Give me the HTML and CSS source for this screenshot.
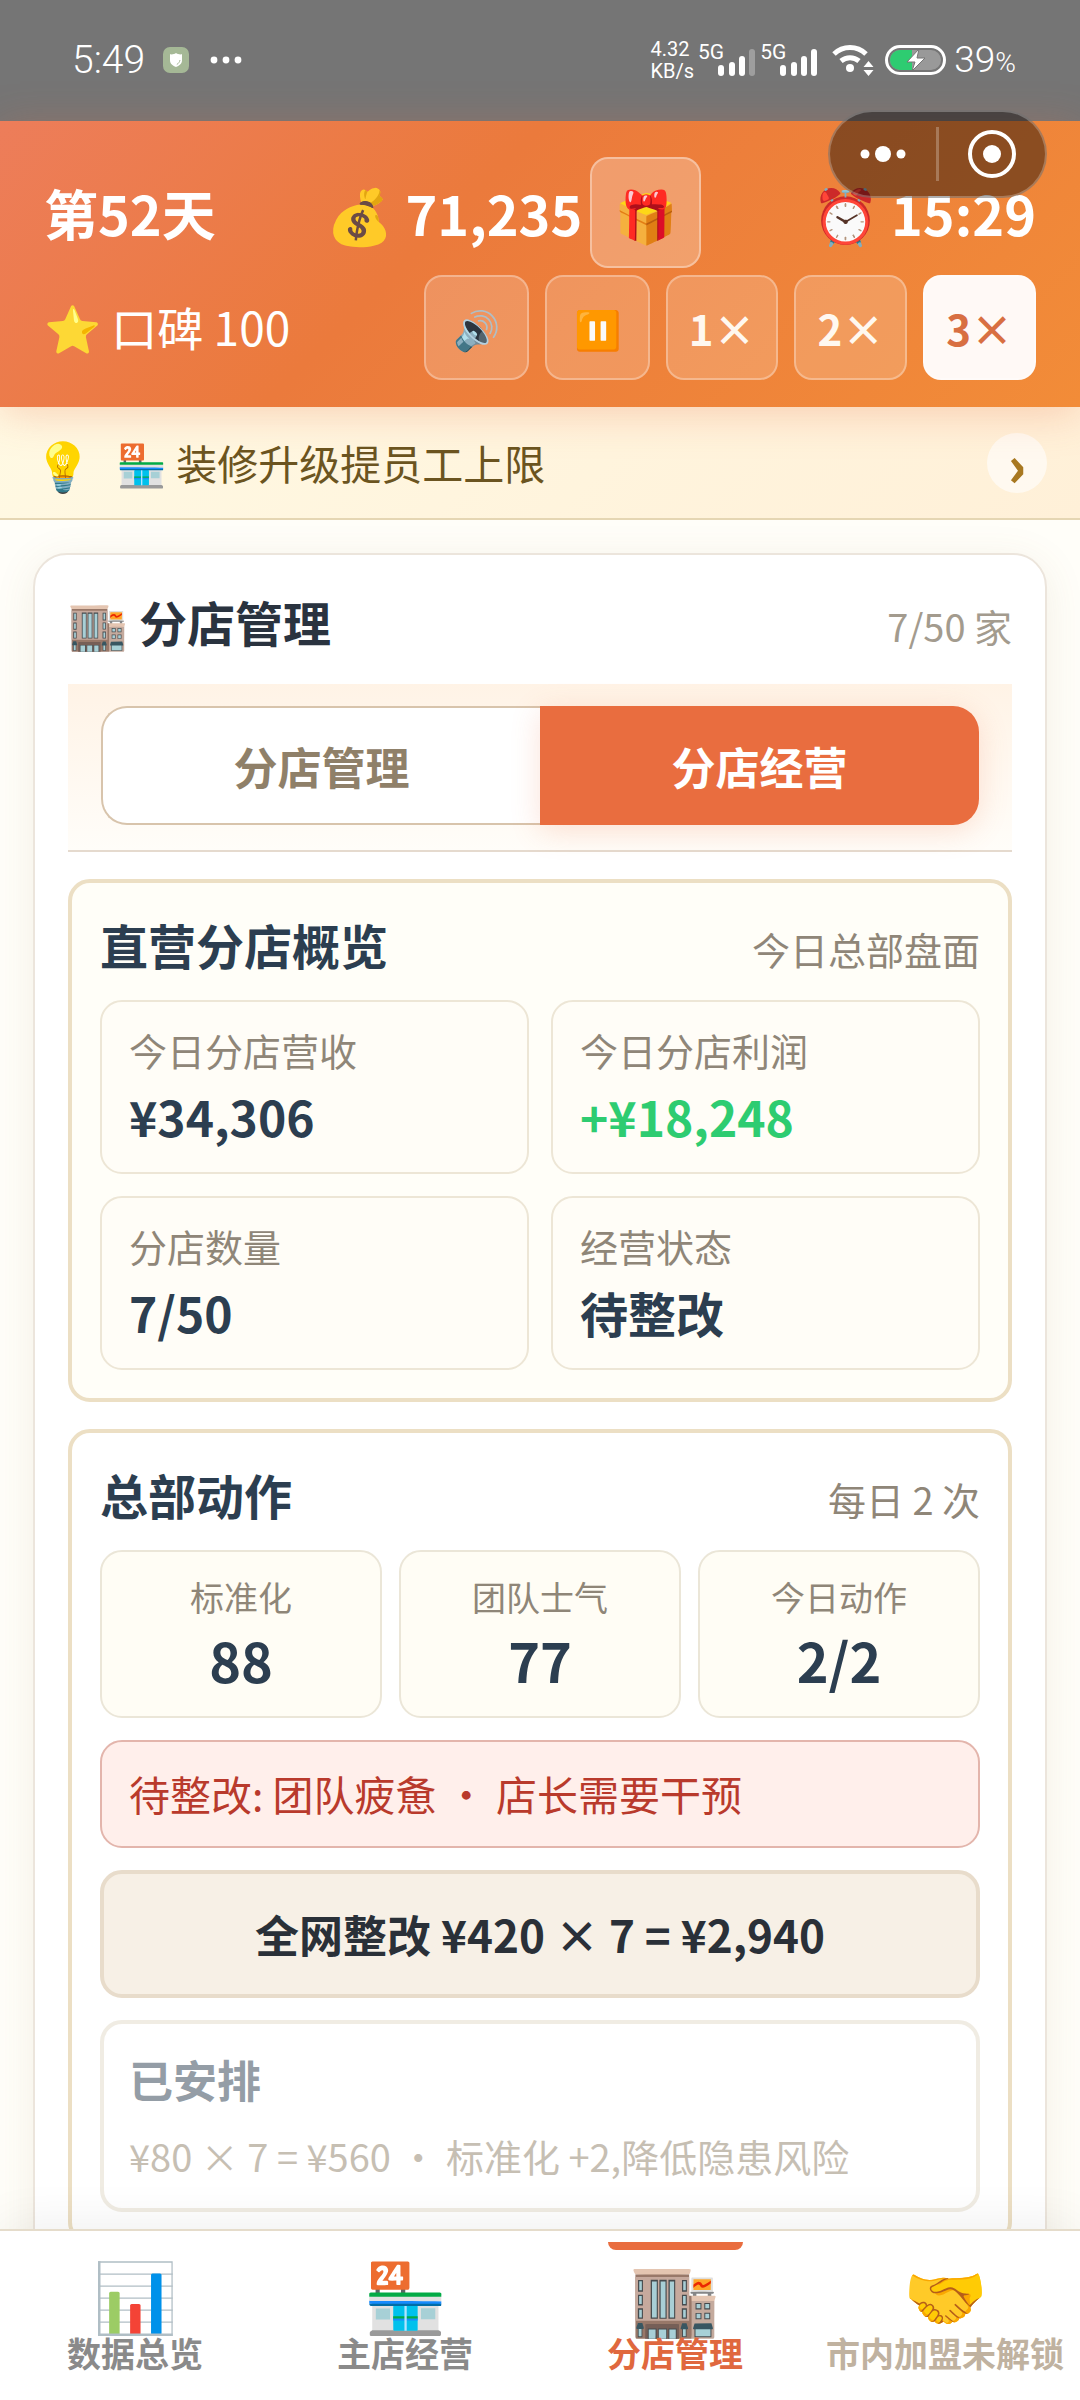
FILE: index.html
```
<!DOCTYPE html>
<html lang="zh-CN">
<head>
    <meta charset="utf-8">
    <meta name="viewport" content="width=device-width, initial-scale=1">
    <title>分店管理</title>
    <link rel="stylesheet" href="styles.css">
</head>
<body>
    <div class="status">
        <span class="clock">5:49</span>
        <svg class="shield" viewBox="0 0 26 26"><rect width="26" height="26" rx="7" fill="#a5b896"/><path d="M13 6c2 1.500 4 1.500 6 1.300v6c0 3.500-3 5.700-6 6.700-3-1-6-3.200-6-6.700v-6c2 .2 4 .2 6-1.300z" fill="#fff"/><path d="M17 13c-.4 2-1.500 3.500-3.200 4.500" fill="none" stroke="#a5b896"/></svg>
        <svg class="more" viewBox="0 0 32 8"><circle cx="4" cy="4" r="3.400"/><circle cx="16" cy="4" r="3.400"/><circle cx="28" cy="4" r="3.400"/></svg>
        <div class="status-right">
            <div class="speed">4.32<br>KB/s</div>
            <div class="signal">
                <span>5G</span>
                <svg viewBox="0 0 38 27"><rect y="16" width="6" height="11" rx="3"/><rect x="11" y="13" width="6" height="14" rx="3"/><rect x="21" y="7" width="6" height="20" rx="3"/><rect x="31" width="6" height="27" rx="3" opacity=".3"/></svg>
            </div>
            <div class="signal">
                <span>5G</span>
                <svg viewBox="0 0 38 27"><rect y="16" width="6" height="11" rx="3"/><rect x="11" y="13" width="6" height="14" rx="3"/><rect x="21" y="7" width="6" height="20" rx="3"/><rect x="31" width="6" height="27" rx="3"/></svg>
            </div>
            <svg class="wifi" viewBox="0 0 42 32"><path d="M2 10a23 23 0 0 1 32 0M9 17a14 14 0 0 1 18 0" fill="none" stroke="#fff" stroke-width="5"/><circle cx="18" cy="24" r="4"/><path d="M36.500 17l5 6h-10zM36.500 32l5-6h-10z"/></svg>
            <svg class="battery" viewBox="0 0 62 30"><rect x="1.500" y="1.500" width="58" height="27" rx="13.500" fill="none" stroke="#fff" stroke-width="3"/><rect x="5" y="5" width="51" height="20" rx="10" fill="#999"/><path d="M15 5h12v20H15a10 10 0 0 1 0-20z" fill="#2ecc71"/><path d="M34 4L22 17h8l-3 9 13-13h-8z" stroke="#757575"/></svg>
            <span class="percent">39<small>%</small></span>
        </div>
    </div>

    <div class="capsule">
        <button class="capsule-btn" aria-label="更多"><svg viewBox="0 0 56 56"><circle cx="10" cy="28" r="4.500"/><circle cx="28" cy="28" r="8"/><circle cx="46" cy="28" r="4.500"/></svg></button>
        <button class="capsule-btn" aria-label="关闭"><svg viewBox="0 0 56 56"><circle cx="28" cy="28" r="22" fill="none" stroke="#fff" stroke-width="4"/><circle cx="28" cy="28" r="9"/></svg></button>
    </div>

    <header class="header">
        <div class="header-row header-main">
            <span>第52天</span>
            <span class="money">💰 71,235<button class="gift">🎁</button></span>
            <span>⏰ 15:29</span>
        </div>
        <div class="header-row">
            <span class="rep">⭐ 口碑 100</span>
            <div class="speeds">
                <button class="ctrl icon">🔊</button>
                <button class="ctrl icon">⏸️</button>
                <button class="ctrl">1×</button>
                <button class="ctrl">2×</button>
                <button class="ctrl active">3×</button>
            </div>
        </div>
    </header>

    <div class="tip">
        <span class="bulb">💡</span>
        <span class="tip-text">🏪 装修升级提员工上限</span>
        <button class="tip-next">›</button>
    </div>

    <main class="main">
        <section class="card">
            <div class="card-head">
                <h1>🏬 分店管理</h1>
                <span class="note">7/50 家</span>
            </div>
            <div class="tabs">
                <button class="tab">分店管理</button>
                <button class="tab active">分店经营</button>
            </div>

            <section class="panel warm">
                <div class="panel-head">
                    <h2>直营分店概览</h2>
                    <span class="note">今日总部盘面</span>
                </div>
                <div class="stats">
                    <div class="stat"><span>今日分店营收</span><b>¥34,306</b></div>
                    <div class="stat"><span>今日分店利润</span><b class="up">+¥18,248</b></div>
                    <div class="stat"><span>分店数量</span><b>7/50</b></div>
                    <div class="stat"><span>经营状态</span><b>待整改</b></div>
                </div>
            </section>

            <section class="panel">
                <div class="panel-head">
                    <h2>总部动作</h2>
                    <span class="note">每日 2 次</span>
                </div>
                <div class="scores">
                    <div class="score"><span>标准化</span><b>88</b></div>
                    <div class="score"><span>团队士气</span><b>77</b></div>
                    <div class="score"><span>今日动作</span><b>2/2</b></div>
                </div>
                <div class="alert">待整改: 团队疲惫 · 店长需要干预</div>
                <button class="fix">全网整改 ¥420 × 7 = ¥2,940</button>
                <button class="action" disabled>
                    <b>已安排</b>
                    <span>¥80 × 7 = ¥560 · 标准化 +2,降低隐患风险</span>
                </button>
            </section>
        </section>
    </main>

    <nav class="nav">
        <a class="nav-item" href="#data"><i>📊</i>数据总览</a>
        <a class="nav-item" href="#main"><i>🏪</i>主店经营</a>
        <a class="nav-item active" href="#branch"><i>🏬</i>分店管理</a>
        <a class="nav-item locked" href="#join"><i>🤝</i>市内加盟未解锁</a>
    </nav>
</body>
</html>
```
FILE: styles.css
```
* {
    box-sizing: border-box;
}

body {
    margin: 0;
    height: 100vh;
    display: flex;
    flex-direction: column;
    overflow: hidden;
    background: #fffef9;
    color: #2c3e50;
    font-family: "Noto Sans CJK SC", sans-serif;
}

h1, h2 {
    margin: 0;
    font-size: 48px;
    font-weight: 700;
}

h1 {
    color: #2a333f;
}

button {
    margin: 0;
    padding: 0;
    border: 0;
    font-family: inherit;
    color: inherit;
    background: none;
}

/* 状态栏 */
.status {
    flex: none;
    height: 121px;
    padding: 0 64px 2px 72px;
    display: flex;
    align-items: center;
    background: #757575;
    color: #fff;
    font-family: Roboto, "Noto Sans CJK SC", sans-serif;
}

.status svg {
    fill: #fff;
}

.clock {
    font-size: 39px;
    font-weight: 300;
}

.shield {
    width: 26px;
    margin-left: 18px;
}

.more {
    width: 32px;
    margin-left: 21px;
}

.status-right {
    margin-left: auto;
    display: flex;
    align-items: center;
}

.speed {
    font-size: 20px;
    line-height: 22px;
}

.signal {
    display: flex;
    align-items: flex-start;
    margin-left: 4px;
    font-size: 21px;
    line-height: 18px;
}

.signal svg {
    width: 38px;
    margin: 6px 0 0 -6px;
}

.wifi {
    width: 42px;
    margin-left: 14px;
}

.battery {
    width: 62px;
    margin: 0 7px 0 11px;
}

.percent {
    font-size: 37px;
    font-weight: 300;
}

.percent small {
    font-size: 28px;
}

.capsule {
    position: absolute;
    top: 110px;
    right: 33px;
    z-index: 5;
    width: 219px;
    height: 88px;
    padding: 15px 0;
    display: flex;
    border: 2px solid rgba(255, 255, 255, .25);
    border-radius: 44px;
    background: rgba(0, 0, 0, .42);
}

.capsule-btn {
    flex: 1;
    display: flex;
    align-items: center;
    justify-content: center;
}

.capsule-btn + .capsule-btn {
    border-left: 3px solid rgba(255, 255, 255, .25);
}

.capsule-btn svg {
    width: 56px;
    fill: #fff;
}

/* 顶部 */
.header {
    flex: none;
    position: relative;
    z-index: 2;
    padding: 36px 44px 27px;
    background: linear-gradient(135deg, #ed7d5a 0%, #eb7a3c 40%, #f28c38 100%);
    box-shadow: 0 6px 40px rgba(233, 109, 63, .28);
    color: #fff;
}

.header-row {
    display: flex;
    align-items: center;
    justify-content: space-between;
}

.header-main {
    margin-bottom: 7px;
    font-size: 54px;
    font-weight: 700;
    line-height: 70px;
}

.money {
    display: flex;
    align-items: center;
    white-space: pre;
}

.gift {
    width: 111px;
    height: 111px;
    margin-left: 8px;
    border: 2px solid rgba(255, 255, 255, .35);
    border-radius: 18px;
    background: rgba(255, 255, 255, .25);
    font-size: 51px;
}

.rep {
    padding-bottom: 4px;
    font-size: 46px;
    line-height: 66px;
}

.speeds {
    display: flex;
    gap: 16px;
}

.ctrl {
    height: 105px;
    padding: 0 21px;
    border: 2px solid rgba(255, 255, 255, .3);
    border-radius: 18px;
    background: rgba(255, 255, 255, .18);
    color: #fff8f0;
    font-size: 42px;
    font-weight: 700;
}

.ctrl.icon {
    width: 105px;
    padding: 0;
    font-size: 38px;
}

.ctrl.active {
    background: #fff9f6;
    color: #d86f42;
}

/* 提示条 */
.tip {
    flex: none;
    height: 113px;
    padding: 0 33px;
    display: flex;
    align-items: center;
    border-bottom: 2px solid #e5d6b3;
    background: linear-gradient(135deg, #fff9e3, #fff0d8);
    color: #6b5420;
}

.bulb {
    width: 83px;
    font-size: 48px;
    line-height: 66px;
}

.tip-text {
    flex: 1;
    padding-bottom: 2px;
    font-size: 41px;
}

.tip-next {
    width: 60px;
    height: 60px;
    border-radius: 50%;
    background: rgba(255, 255, 255, .6);
    color: #a87820;
    font-size: 56px;
    font-weight: 900;
    line-height: 60px;
}

/* 内容 */
.main {
    flex: 1;
    min-height: 0;
    padding: 33px;
    overflow: hidden;
}

.card {
    padding: 33px;
    border: 2px solid #ece5dc;
    border-radius: 34px;
    background: #fff;
    box-shadow: 0 8px 40px rgba(139, 105, 60, .1);
}

.card-head,
.panel-head {
    display: flex;
    align-items: baseline;
    justify-content: space-between;
    line-height: 66px;
}

.card-head {
    margin-bottom: 25px;
}

.panel-head {
    margin-bottom: 18px;
}

.note {
    color: #8f8678;
    font-size: 38px;
}

.card-head .note {
    color: #a39b8e;
}

.tabs {
    display: grid;
    grid-template-columns: 1fr 1fr;
    padding: 22px 33px 25px;
    border-bottom: 2px solid #e5dace;
    background: linear-gradient(#fff3e6, #fffdf9);
}

.tab {
    height: 119px;
    border: 2px solid #d8c4ac;
    border-right: 0;
    border-radius: 26px 0 0 26px;
    background: #fff;
    color: #8f8069;
    font-size: 44px;
    font-weight: 700;
}

.tab.active {
    border: 0;
    border-radius: 0 26px 26px 0;
    background: #e96d3f;
    box-shadow: 0 6px 30px rgba(233, 109, 63, .2);
    color: #fff;
}

.panel {
    margin-top: 27px;
    padding: 28px;
    border: 4px solid #ecdfc4;
    border-radius: 22px;
}

.panel.warm {
    background: #fffef8;
}

.stats {
    display: grid;
    grid-template-columns: 1fr 1fr;
    gap: 22px;
}

.stat {
    display: flex;
    flex-direction: column;
    gap: 11px;
    padding: 23px 27px 26px;
    border: 2px solid #ede6d6;
    border-radius: 22px;
    background: #fffdf7;
}

.stat span {
    color: #8f8678;
    font-size: 38px;
    line-height: 50px;
}

.stat b {
    font-size: 48px;
    line-height: 60px;
}

.stat .up {
    color: #2ecc71;
}

.scores {
    display: grid;
    grid-template-columns: repeat(3, 1fr);
    gap: 17px;
}

.score {
    display: flex;
    flex-direction: column;
    gap: 6px;
    padding: 20px 0 24px;
    border: 2px solid #ebe6d8;
    border-radius: 22px;
    background: #fffdf5;
    text-align: center;
}

.score span {
    color: #8f8678;
    font-size: 34px;
    line-height: 50px;
}

.score b {
    font-size: 54px;
    line-height: 64px;
}

.alert {
    margin-top: 22px;
    padding: 21px 27px 23px;
    border: 2px solid #e3b5ac;
    border-radius: 22px;
    background: #ffefeb;
    color: #b93a2c;
    font-size: 41px;
    line-height: 60px;
}

.fix {
    display: block;
    width: 100%;
    height: 128px;
    margin-top: 22px;
    border: 4px solid #e8dccb;
    border-radius: 22px;
    background: #f7f0e6;
    color: #2a3038;
    font-size: 44px;
    font-weight: 700;
}

.action {
    display: flex;
    flex-direction: column;
    gap: 14px;
    width: 100%;
    margin-top: 22px;
    padding: 22px 25px;
    border: 4px solid #e2dac8;
    border-radius: 22px;
    background: #fff;
    color: #2c3e50;
    opacity: .5;
    text-align: left;
}

.action b {
    font-size: 44px;
    line-height: 66px;
}

.action span {
    color: #8f8069;
    font-size: 38px;
    line-height: 60px;
}

/* 底部导航 */
.nav {
    flex: none;
    position: relative;
    z-index: 2;
    height: 171px;
    padding-top: 11px;
    display: grid;
    grid-template-columns: repeat(4, 1fr);
    border-top: 2px solid #e5dccb;
    background: #fff;
    box-shadow: 0 -8px 44px rgba(0, 0, 0, .06);
}

.nav-item {
    position: relative;
    display: flex;
    flex-direction: column;
    align-items: center;
    color: #8a8a8a;
    font-size: 34px;
    font-weight: 700;
    line-height: 44px;
    text-decoration: none;
    white-space: nowrap;
}

.nav-item i {
    height: 89px;
    font-size: 68px;
    font-style: normal;
    font-weight: 400;
    line-height: 102px;
}

.nav-item.active {
    color: #e0683e;
}

.nav-item.active i {
    font-size: 72px;
}

.nav-item.active::before {
    content: "";
    position: absolute;
    top: 0;
    width: 135px;
    height: 8px;
    border-radius: 0 0 8px 8px;
    background: #e96d3f;
}

.nav-item.locked {
    color: #c0b2a0;
}
```
